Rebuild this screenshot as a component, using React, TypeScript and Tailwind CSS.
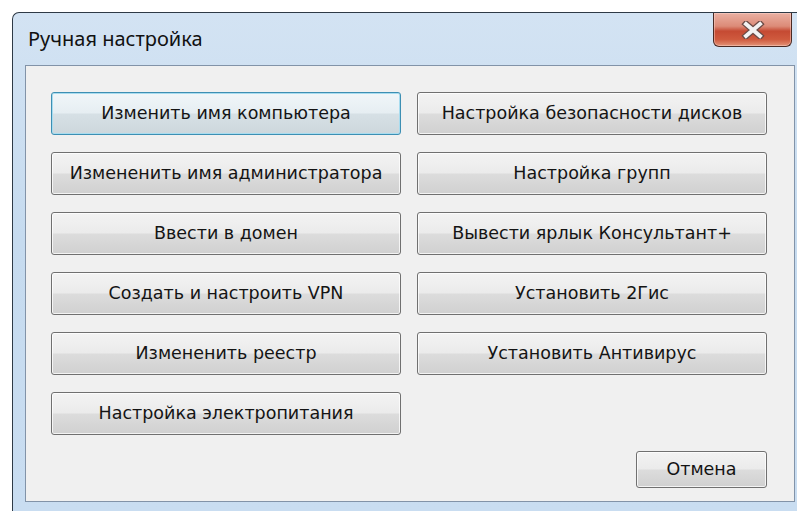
import React from 'react'

// Кнопки окна ручной настройки, по две в ряд
const leftActions = [
  'Изменить имя компьютера',
  'Измененить имя администратора',
  'Ввести в домен',
  'Создать и настроить VPN',
  'Измененить реестр',
  'Настройка электропитания',
]

const rightActions = [
  'Настройка безопасности дисков',
  'Настройка групп',
  'Вывести ярлык Консультант+',
  'Установить 2Гис',
  'Установить Антивирус',
]

const btnBase =
  "flex items-center justify-center rounded-[3px] border text-[17.5px] text-[#141414] font-['DejaVu_Sans',sans-serif]"

const btnNormal =
  'border-[#707070] bg-[linear-gradient(to_bottom,#f3f3f3_0%,#ebebeb_48%,#dcdcdc_52%,#d0d0d0_100%)] shadow-[inset_0_0_0_1px_rgba(255,255,255,0.75)]'

const btnFocused =
  'border-[#3d8fb3] bg-[linear-gradient(to_bottom,#f0f6f9_0%,#e6eef2_48%,#d6e0e5_52%,#cdd7dc_100%)] shadow-[inset_0_0_0_1px_#a8dcef]'

function WinButton({ label, focused }: { label: string; focused?: boolean }) {
  return (
    <button className={`${btnBase} ${focused ? btnFocused : btnNormal} h-[43px] w-[350px]`}>
      {label}
    </button>
  )
}

function CloseButton() {
  return (
    <div className="flex h-[34px] w-[79px] items-center justify-center rounded-b-[6px] border border-t-0 border-[#4a2a24] bg-[linear-gradient(to_bottom,#eab0a2_0%,#dc8b78_40%,#c54a33_55%,#cf5a3e_80%,#e39377_100%)] shadow-[inset_0_0_0_1px_rgba(255,220,210,0.45)]">
      <svg width="24" height="18" viewBox="0 0 24 18">
        <path
          d="M5 3 L19 15 M19 3 L5 15"
          stroke="#6a4a45"
          strokeWidth="6.5"
          strokeLinecap="square"
        />
        <path
          d="M5 3 L19 15 M19 3 L5 15"
          stroke="#f2f2f2"
          strokeWidth="4"
          strokeLinecap="square"
        />
      </svg>
    </div>
  )
}

export default function App() {
  return (
    <div className="h-[511px] w-[797px] overflow-hidden bg-white pl-[12px] pt-[12px]">
      <div className="flex h-full w-[800px] flex-col rounded-tl-[7px] border-l border-t border-[#2e3a46] bg-[linear-gradient(to_bottom,#d3e3f3_0%,#c6dbef_45%,#c9ddf1_100%)]">
        {/* Заголовок окна */}
        <div className="flex h-[52px] items-start">
          <div className="flex h-full items-center pl-[15px] text-[20px] text-[#111] font-['Noto_Sans',sans-serif]">
            Ручная настройка
          </div>
          <div className="ml-auto mr-[20px]">
            <CloseButton />
          </div>
        </div>

        {/* Клиентская область */}
        <div className="flex-1 pb-[9px] pl-[12px]">
          <div className="h-full w-[770px] border border-[#8293a8] bg-[#f0f0f0] pl-[25px] pt-[26px]">
            <div className="flex gap-x-[16px]">
              <div className="flex flex-col gap-y-[17px]">
                {leftActions.map((label, i) => (
                  <WinButton key={label} label={label} focused={i === 0} />
                ))}
              </div>
              <div className="flex flex-col gap-y-[17px]">
                {rightActions.map((label) => (
                  <WinButton key={label} label={label} />
                ))}
              </div>
            </div>
            <div className="mt-[16px] flex w-[716px] justify-end">
              <button className={`${btnBase} ${btnNormal} h-[37px] w-[131px]`}>Отмена</button>
            </div>
          </div>
        </div>
      </div>
    </div>
  )
}
